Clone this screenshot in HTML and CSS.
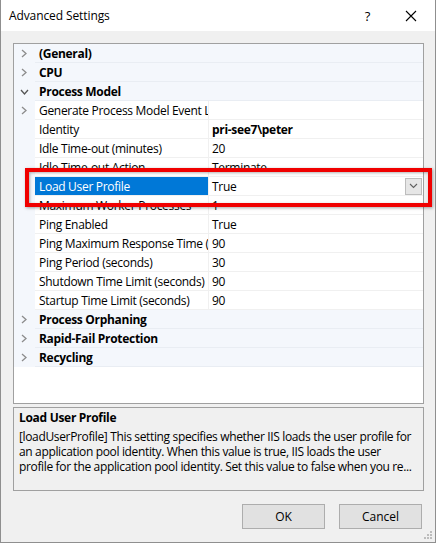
FILE: index.html
```html
<!DOCTYPE html>
<html lang="en">
<head>
    <meta charset="UTF-8">
    <meta name="viewport" content="width=device-width, initial-scale=1.0">
    <title>Advanced Settings</title>
    <link rel="stylesheet" href="styles.css">
</head>
<body>
    <div class="dialog">
        <div class="titlebar">
            <span class="title">Advanced Settings</span>
            <span class="help">?</span>
            <svg class="close" width="12" height="12" viewBox="0 0 12 12">
                <path d="M1 1 L11 11 M11 1 L1 11" stroke="#000" stroke-width="1.1" fill="none"/>
            </svg>
        </div>
        <div class="body">
            <div class="grid">
                <div class="row category">
                    <span class="gutter"><svg class="chev" width="8" height="9" viewBox="0 0 8 9"><path d="M2 1 L6 4.5 L2 8" stroke="#8c8c8c" stroke-width="1.3" fill="none"/></svg></span>
                    <span class="cat-label">(General)</span>
                </div>
                <div class="row category">
                    <span class="gutter"><svg class="chev" width="8" height="9" viewBox="0 0 8 9"><path d="M2 1 L6 4.5 L2 8" stroke="#8c8c8c" stroke-width="1.3" fill="none"/></svg></span>
                    <span class="cat-label">CPU</span>
                </div>
                <div class="row category">
                    <span class="gutter"><svg class="chev" width="9" height="8" viewBox="0 0 9 8"><path d="M1 2 L4.5 6 L8 2" stroke="#555" stroke-width="1.3" fill="none"/></svg></span>
                    <span class="cat-label">Process Model</span>
                </div>
                <div class="row">
                    <span class="gutter"><svg class="chev" width="8" height="9" viewBox="0 0 8 9"><path d="M2 1 L6 4.5 L2 8" stroke="#8c8c8c" stroke-width="1.3" fill="none"/></svg></span>
                    <span class="label">Generate Process Model Event Log Entry</span>
                    <span class="value"></span>
                </div>
                <div class="row">
                    <span class="gutter"></span>
                    <span class="label">Identity</span>
                    <span class="value bold">pri-see7\peter</span>
                </div>
                <div class="row">
                    <span class="gutter"></span>
                    <span class="label">Idle Time-out (minutes)</span>
                    <span class="value">20</span>
                </div>
                <div class="row">
                    <span class="gutter"></span>
                    <span class="label">Idle Time-out Action</span>
                    <span class="value">Terminate</span>
                </div>
                <div class="row selected">
                    <span class="gutter"></span>
                    <span class="label">Load User Profile</span>
                    <span class="value">True
                        <span class="drop"><svg width="9" height="6" viewBox="0 0 9 6"><path d="M1 1 L4.5 4.5 L8 1" stroke="#606060" stroke-width="1.1" fill="none"/></svg></span>
                    </span>
                </div>
                <div class="row">
                    <span class="gutter"></span>
                    <span class="label">Maximum Worker Processes</span>
                    <span class="value">1</span>
                </div>
                <div class="row">
                    <span class="gutter"></span>
                    <span class="label">Ping Enabled</span>
                    <span class="value">True</span>
                </div>
                <div class="row">
                    <span class="gutter"></span>
                    <span class="label">Ping Maximum Response Time (seconds)</span>
                    <span class="value">90</span>
                </div>
                <div class="row">
                    <span class="gutter"></span>
                    <span class="label">Ping Period (seconds)</span>
                    <span class="value">30</span>
                </div>
                <div class="row">
                    <span class="gutter"></span>
                    <span class="label">Shutdown Time Limit (seconds)</span>
                    <span class="value">90</span>
                </div>
                <div class="row">
                    <span class="gutter"></span>
                    <span class="label">Startup Time Limit (seconds)</span>
                    <span class="value">90</span>
                </div>
                <div class="row category">
                    <span class="gutter"><svg class="chev" width="8" height="9" viewBox="0 0 8 9"><path d="M2 1 L6 4.5 L2 8" stroke="#8c8c8c" stroke-width="1.3" fill="none"/></svg></span>
                    <span class="cat-label">Process Orphaning</span>
                </div>
                <div class="row category">
                    <span class="gutter"><svg class="chev" width="8" height="9" viewBox="0 0 8 9"><path d="M2 1 L6 4.5 L2 8" stroke="#8c8c8c" stroke-width="1.3" fill="none"/></svg></span>
                    <span class="cat-label">Rapid-Fail Protection</span>
                </div>
                <div class="row category">
                    <span class="gutter"><svg class="chev" width="8" height="9" viewBox="0 0 8 9"><path d="M2 1 L6 4.5 L2 8" stroke="#8c8c8c" stroke-width="1.3" fill="none"/></svg></span>
                    <span class="cat-label">Recycling</span>
                </div>
            </div>
            <div class="description">
                <div class="desc-title">Load User Profile</div>
                <div class="desc-line">[loadUserProfile] This setting specifies whether IIS loads the user profile for</div>
                <div class="desc-line">an application pool identity. When this value is true, IIS loads the user</div>
                <div class="desc-line">profile for the application pool identity. Set this value to false when you re...</div>
            </div>
            <div class="buttons">
                <button class="btn">OK</button>
                <button class="btn">Cancel</button>
            </div>
        </div>
        <svg class="grip" width="10" height="10" viewBox="0 0 10 10">
            <rect x="7" y="1" width="2" height="2" fill="#bcbcbc"/>
            <rect x="4" y="4" width="2" height="2" fill="#bcbcbc"/>
            <rect x="7" y="4" width="2" height="2" fill="#bcbcbc"/>
            <rect x="1" y="7" width="2" height="2" fill="#bcbcbc"/>
            <rect x="4" y="7" width="2" height="2" fill="#bcbcbc"/>
            <rect x="7" y="7" width="2" height="2" fill="#bcbcbc"/>
        </svg>
        <div class="highlight"></div>
    </div>
</body>
</html>
```

FILE: styles.css
```css
body {
    margin: 0;
    font-family: "Open Sans", "Noto Sans", sans-serif;
    font-size: 12px;
    letter-spacing: -0.3px;
    color: #000;
}
.dialog {
    position: relative;
    width: 436px;
    height: 543px;
    box-sizing: border-box;
    background-color: #f0f0f0;
    border-left: 1px solid #8f8f8f;
    border-right: 1px solid #8f8f8f;
    border-bottom: 1px solid #8f8f8f;
    display: flex;
    flex-direction: column;
}
.titlebar {
    height: 31px;
    background-color: #fff;
    display: flex;
    align-items: center;
    padding-left: 8px;
    flex-shrink: 0;
}
.title {
    font-size: 12px;
    letter-spacing: -0.1px;
    flex-grow: 1;
}
.help {
    font-size: 13px;
    margin-right: 35px;
}
.close {
    margin-right: 18px;
}
.body {
    padding: 12px 11px 0 12px;
    display: flex;
    flex-direction: column;
}
.grid {
    height: 361px;
    box-sizing: border-box;
    border: 1px solid #a0a0a0;
    background-color: #fff;
    overflow: hidden;
}
.row {
    display: flex;
    height: 19px;
    box-sizing: border-box;
    border-bottom: 1px solid #f0f0f0;
    align-items: center;
    line-height: 18px;
}
.gutter {
    width: 21px;
    height: 19px;
    flex-shrink: 0;
    background-color: #f4f7fc;
    display: flex;
    align-items: center;
    padding-left: 6px;
    box-sizing: border-box;
    margin-top: 1px;
}
.category {
    background-color: #f4f7fc;
    border-bottom-color: #e9edf3;
}
.cat-label {
    font-weight: bold;
    padding-left: 4px;
    padding-top: 2px;
}
.label {
    width: 174px;
    flex-shrink: 0;
    padding-left: 4px;
    padding-top: 1px;
    box-sizing: border-box;
    white-space: nowrap;
    overflow: hidden;
    height: 18px;
    border-right: 1px solid #f0f0f0;
}
.value {
    flex-grow: 1;
    padding-left: 3px;
    padding-top: 1px;
    box-sizing: border-box;
    height: 18px;
    display: flex;
    align-items: center;
}
.bold {
    font-weight: bold;
}
.selected .label {
    background-color: #0078d7;
    color: #fff;
}
.drop {
    margin-left: auto;
    width: 17px;
    height: 17px;
    box-sizing: border-box;
    border: 1px solid #bdbdbd;
    background-color: #e6e6e6;
    display: flex;
    align-items: center;
    justify-content: center;
    margin-right: 1px;
    margin-top: -1px;
}
.description {
    margin-top: 3px;
    height: 84px;
    box-sizing: border-box;
    border: 1px solid #a0a0a0;
    padding: 2px 5px;
    line-height: 15px;
}
.desc-title {
    font-weight: bold;
    margin-bottom: 4px;
}
.desc-line {
    white-space: nowrap;
    letter-spacing: -0.35px;
}
.buttons {
    display: flex;
    justify-content: flex-end;
    gap: 14px;
    margin-top: 13px;
    padding-right: 2px;
}
.btn {
    width: 83px;
    height: 25px;
    font-family: "Open Sans", "Noto Sans", sans-serif;
    font-size: 12px;
    background-color: #e1e1e1;
    border: 1px solid #adadad;
    padding: 0;
}
.grip {
    position: absolute;
    right: 2px;
    bottom: 2px;
}
.highlight {
    position: absolute;
    left: 24px;
    top: 168px;
    width: 407px;
    height: 39px;
    box-sizing: border-box;
    border: 4px solid #f00000;
    box-shadow: 1px 1px 3px rgba(0, 0, 0, 0.35), inset 1px 1px 3px rgba(0, 0, 0, 0.3);
}
```
